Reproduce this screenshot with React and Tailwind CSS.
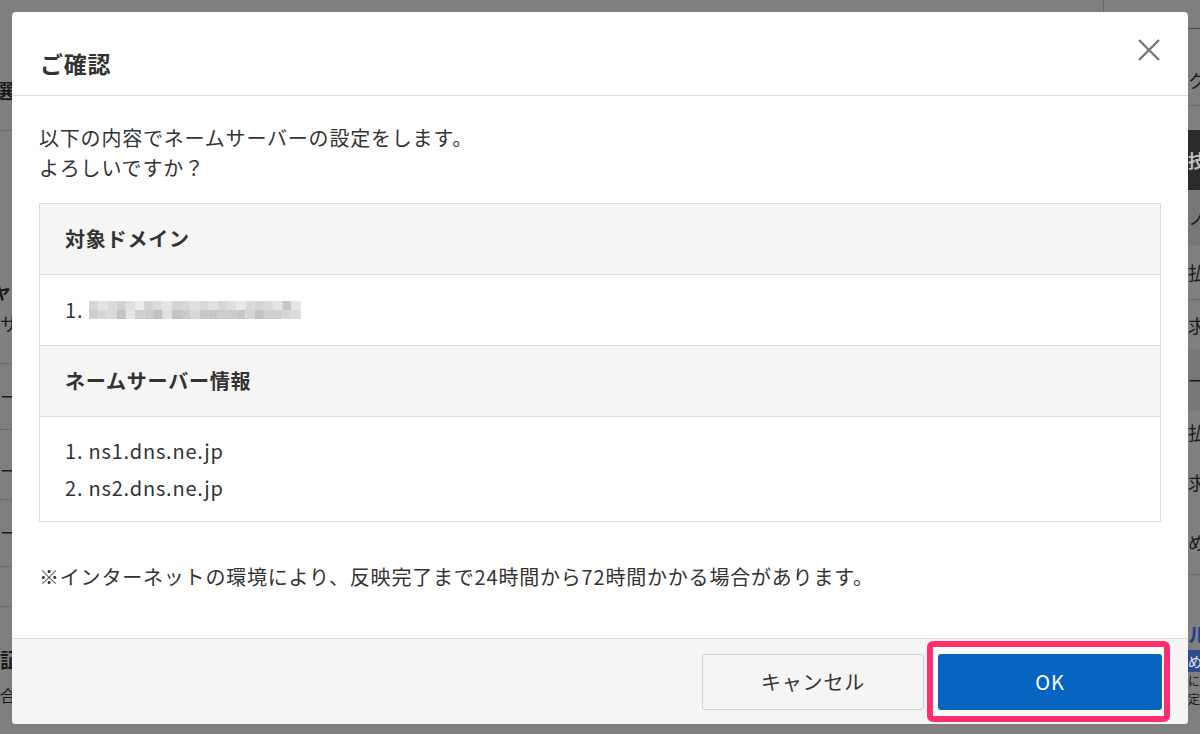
import React from "react";

const FONT = "font-['Noto_Sans_CJK_JP','Noto_Sans',sans-serif]";

const ROW_A = ["#d6d6d6", "#e2e2e2", "#dadada", "#d2d2d2", "#e0e0e0", "#ececec", "#d2d2d2", "#dcdcdc", "#e4e4e4", "#d4d4d4", "#d8d8d8", "#dedede", "#d8d8d8", "#e1e1e1", "#d6d6d6", "#dddddd", "#e8e8e8", "#d9d9d9", "#d4d4d4", "#dbdbdb", "#e3e3e3", "#c6c6c6", "#e6e6e6"];
const ROW_B = ["#cdcdcd", "#d5d5d5", "#d9d9d9", "#c2c2c2", "#e5e5e5", "#cfcfcf", "#cbcbcb", "#c0c0c0", "#e1e1e1", "#c2c2c2", "#cacaca", "#d7d7d7", "#c8c8c8", "#c6c6c6", "#cdcdcd", "#cbcbcb", "#c6c6c6", "#d4d4d4", "#c3c3c3", "#cfcfcf", "#cfcfcf", "#d5d5d5", "#dadada"];

// blurred domain name
const Mosaic = () => (
  <svg width="212" height="20" viewBox="0 0 212 20" className="inline-block align-middle">
    {ROW_A.map((c, i) => (
      <rect key={"a" + i} x={i * 9.2} y="1" width="9.3" height="9" fill={c} />
    ))}
    {ROW_B.map((c, i) => (
      <rect key={"b" + i} x={i * 9.2} y="10" width="9.3" height="9" fill={c} />
    ))}
  </svg>
);

const Strip = ({ items }) => (
  <div className="w-[12px] overflow-hidden flex flex-col">
    {items.map((it, i) => (
      <div key={i} className={"whitespace-nowrap shrink-0 " + (it.cls || "")} style={{ height: it.h }}>
        {it.t}
      </div>
    ))}
  </div>
);

const leftItems = [
  { h: 80 },
  { h: 22, t: "選", cls: "text-[20px] font-bold leading-[22px] text-[#1a1a1a] -ml-[6px]" },
  { h: 28 },
  { h: 1, cls: "bg-[#6c6c6c]" },
  { h: 149 },
  { h: 22, t: "ャ", cls: "text-[20px] font-bold leading-[22px] text-[#1a1a1a] -ml-[8px]" },
  { h: 10 },
  { h: 22, t: "サ", cls: "text-[18px] leading-[22px] text-[#1a1a1a]" },
  { h: 29 },
  { h: 1, cls: "bg-[#6c6c6c]" },
  { h: 21 },
  { h: 22, t: "ー", cls: "text-[18px] leading-[22px] text-[#1a1a1a]" },
  { h: 22 },
  { h: 1, cls: "border-t border-dotted border-[#5c5c5c]" },
  { h: 29 },
  { h: 22, t: "ー", cls: "text-[18px] leading-[22px] text-[#1a1a1a]" },
  { h: 18 },
  { h: 1, cls: "border-t border-dotted border-[#5c5c5c]" },
  { h: 21 },
  { h: 22, t: "ー", cls: "text-[18px] leading-[22px] text-[#1a1a1a]" },
  { h: 23 },
  { h: 1, cls: "bg-[#6c6c6c]" },
  { h: 39 },
  { h: 1, cls: "bg-[#6c6c6c]" },
  { h: 41 },
  { h: 24, t: "証", cls: "text-[20px] font-bold leading-[24px] text-[#1a1a1a]" },
  { h: 12 },
  { h: 22, t: "合", cls: "text-[16px] leading-[22px] text-[#1a1a1a]" },
];

const rightItems = [
  { h: 28 },
  { h: 1, cls: "bg-[#4a4a4a]" },
  { h: 40 },
  { h: 22, t: "ク", cls: "text-[18px] leading-[22px] text-[#1a1a1a]" },
  { h: 14 },
  { h: 1, cls: "bg-[#6c6c6c]" },
  { h: 24 },
  { h: 60, t: "技", cls: "bg-[#2b2b2b] text-[#bdbdbd] text-[18px] font-bold leading-[60px]" },
  { h: 55, t: "ノ", cls: "bg-[#777777] text-[#1a1a1a] text-[18px] leading-[55px]" },
  { h: 55, t: "払", cls: "text-[#1a1a1a] text-[18px] leading-[55px] border-b border-[#6c6c6c]" },
  { h: 50, t: "求", cls: "text-[#1a1a1a] text-[18px] leading-[50px]" },
  { h: 60, t: "ー", cls: "bg-[#777777] text-[#1a1a1a] text-[18px] leading-[60px]" },
  { h: 45, t: "払", cls: "text-[#1a1a1a] text-[18px] leading-[45px]" },
  { h: 55, t: "求", cls: "text-[#1a1a1a] text-[18px] leading-[55px]" },
  { h: 65, t: "め", cls: "text-[#1a1a1a] text-[18px] leading-[65px] border-b border-[#6c6c6c]" },
  { h: 45 },
  { h: 30, t: "ル", cls: "text-[#1f3f8f] text-[20px] font-bold leading-[30px]" },
  { h: 22, t: "め", cls: "bg-[#2d4b8e] text-[#e8e8e8] text-[14px] leading-[22px]" },
  { h: 18, t: "に", cls: "text-[#1a1a1a] text-[12px] leading-[18px]" },
  { h: 18, t: "定", cls: "text-[#1a1a1a] text-[12px] leading-[18px]" },
];

const App = () => {
  return (
    <div className={"relative w-[1200px] h-[734px] overflow-hidden bg-[#7f7f7f] " + FONT}>
      {/* page behind the overlay */}
      <div className="flex h-full">
        <Strip items={leftItems} />
        <div className="flex-1">
          <div className="h-[12px] w-[1092px] border-r border-[#666]" />
        </div>
        <Strip items={rightItems} />
      </div>

      {/* dialog */}
      <div className="absolute left-[12px] top-[12px] w-[1176px] h-[712px] bg-white rounded-[4px] flex flex-col text-[#333] tracking-[0.8px]">
        <div className="h-[84px] shrink-0 border-b border-[#dcdcdc] flex justify-between items-start px-[28px]">
          <h2 className="pt-[35px] text-[23px] leading-[33px] font-bold text-[#333]">ご確認</h2>
          <button className="mt-[27px] w-[22px] h-[22px]">
            <svg width="22" height="22" viewBox="0 0 22 22">
              <path d="M1 1 L21 21 M21 1 L1 21" stroke="#777" strokeWidth="2.4" fill="none" />
            </svg>
          </button>
        </div>

        <div className="px-[27px] pt-[27px]">
          <p className="text-[20px] leading-[30px]">
            以下の内容でネームサーバーの設定をします。
            <br />
            よろしいですか？
          </p>

          <div className="mt-[20px] border border-[#dcdcdc] text-[20px]">
            <div className="bg-[#f5f5f5] px-[25px] py-[20px] leading-[30px] font-bold border-b border-[#dcdcdc]">
              対象ドメイン
            </div>
            <div className="px-[25px] py-[20px] leading-[30px] border-b border-[#dcdcdc] flex items-center">
              <span>1.</span>
              <span className="ml-[6px] flex items-center">
                <Mosaic />
              </span>
            </div>
            <div className="bg-[#f5f5f5] px-[25px] py-[20px] leading-[30px] font-bold border-b border-[#dcdcdc]">
              ネームサーバー情報
            </div>
            <ol className="px-[25px] py-[15px] leading-[37px]">
              <li>1. ns1.dns.ne.jp</li>
              <li>2. ns2.dns.ne.jp</li>
            </ol>
          </div>

          <p className="mt-[40px] text-[20px] leading-[30px]">
            ※インターネットの環境により、反映完了まで24時間から72時間かかる場合があります。
          </p>
        </div>

        <div className="mt-auto h-[86px] shrink-0 bg-[#f5f5f5] border-t border-[#dcdcdc] rounded-b-[4px] flex items-center justify-end pr-[18px]">
          <button className="w-[222px] h-[56px] rounded-[3px] border border-[#d2d2d2] bg-[#f5f5f5] text-[20px] text-[#333] tracking-[0.8px]">
            キャンセル
          </button>
          <div className="ml-[3px] border-[6px] border-[#ff2e6e] rounded-[6px] bg-white pt-[7px] pb-[6px] pl-[5px] pr-[2px]">
            <button className="w-[224px] h-[56px] rounded-[3px] bg-[#0565c0] text-white text-[20px] block">
              OK
            </button>
          </div>
        </div>
      </div>
    </div>
  );
};

export default App;
